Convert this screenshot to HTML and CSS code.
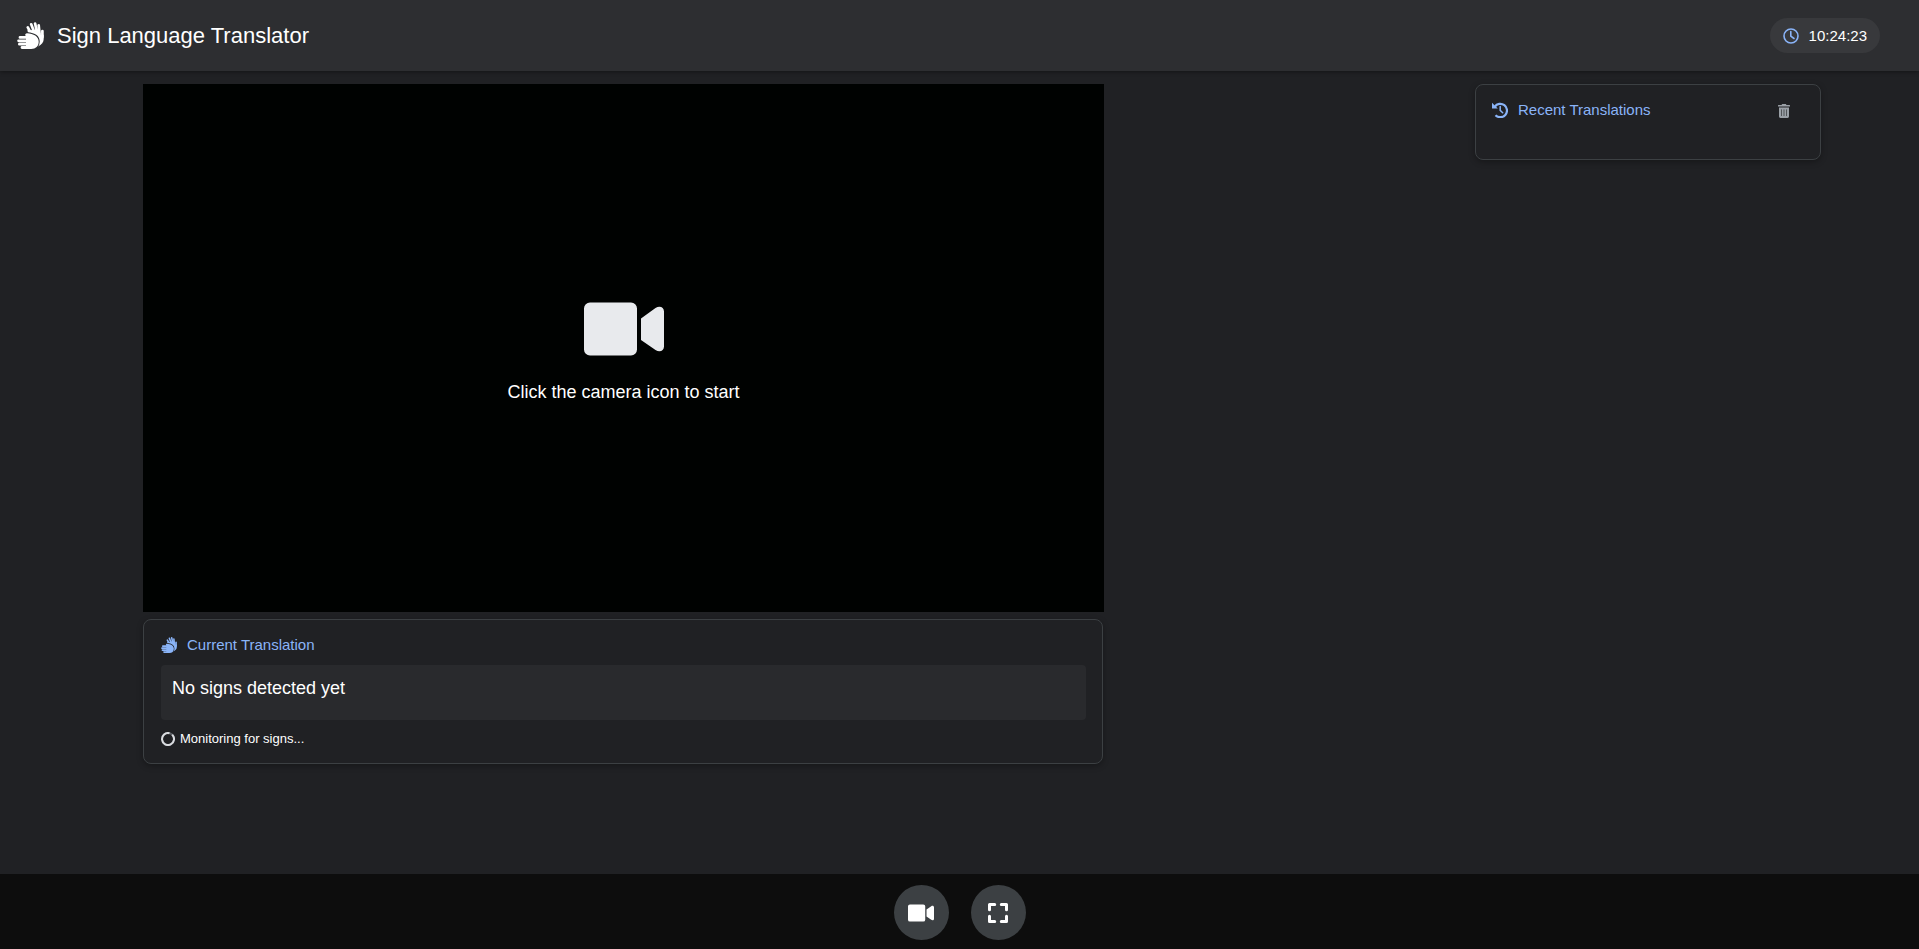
FILE: index.html
```html
<!DOCTYPE html>
<html lang="en">
<head>
<meta charset="utf-8">
<meta name="viewport" content="width=device-width, initial-scale=1">
<title>Sign Language Translator</title>
<link rel="stylesheet" href="styles.css">
</head>
<body>
<svg class="defs" aria-hidden="true">
  <mask id="behind" maskUnits="userSpaceOnUse" x="0" y="0" width="27" height="27">
    <rect width="27" height="27" fill="#fff"/>
    <path fill="#000" stroke="#000" stroke-width="2" d="M9 14.400l-.6-1c-.5-1.300.3-2.300 1.800-2.200 6.300.4 11.500 3 11.500 8.500 0 4.500-3 7.200-7.500 7.200H9z"/>
  </mask>
  <symbol id="hands" viewBox="0 0 27 27">
    <g mask="url(#behind)">
      <path fill="none" stroke="currentColor" stroke-width="2.700" stroke-linecap="round" d="M10.800 5.400 14 11.500M14.200 2.300 17.500 11M18.100 1.500 20 10.500M21.700 3.400 22.600 12M25.400 9v6"/>
      <path fill="currentColor" d="M10 8.500 21 7.500l3 5.200h2.700V17c0 3.500-2 5.500-5.700 7.500z"/>
    </g>
    <path fill="none" stroke="currentColor" stroke-width="2.800" stroke-linecap="round" d="M3 15.400h10M1.600 18.800h11M2.400 22.200h10M5 25.500h8"/>
    <path fill="currentColor" d="M9 14.400l-.6-1c-.5-1.300.3-2.300 1.800-2.200 6.300.4 11.500 3 11.500 8.500 0 4.500-3 7.200-7.500 7.200H9z"/>
  </symbol>
  <symbol id="video" viewBox="0 0 80 54">
    <path fill="currentColor" d="M6 .5h41a6 6 0 0 1 6 6v41a6 6 0 0 1-6 6H6a6 6 0 0 1-6-6v-41a6 6 0 0 1 6-6zM57 16.500 71.500 6c4-2.500 8.500-1 8.500 3.500v35c0 4.500-4.500 6-8.500 3.500L57 38z"/>
  </symbol>
</svg>

<header class="topbar">
  <h1 class="brand"><svg class="brand-icon" aria-hidden="true"><use href="#hands"/></svg>Sign Language Translator</h1>
  <div class="clock">
    <svg class="icon" viewBox="0 0 16 16" aria-hidden="true"><g fill="none" stroke="currentColor" stroke-width="1.600"><circle cx="8" cy="8" r="7"/><path d="M7.800 3.500V8.200l3.200 2.300" stroke-linecap="round"/></g></svg>
    <time>10:24:23</time>
  </div>
</header>

<main class="content">
  <div class="stage">
    <section class="viewer">
      <svg class="viewer-icon" aria-hidden="true"><use href="#video"/></svg>
      <p class="viewer-text">Click the camera icon to start</p>
    </section>
    <section class="card current">
      <h2 class="card-title"><svg class="icon" aria-hidden="true"><use href="#hands"/></svg>Current Translation</h2>
      <div class="output">No signs detected yet</div>
      <p class="status"><svg class="spinner" viewBox="0 0 14 14" aria-hidden="true"><circle cx="7" cy="7" r="6" fill="none" stroke="#5f6368" stroke-width="2"/><path d="M11.200 2.700A6 6 0 1 1 8.500 1.200" fill="none" stroke="#dadce0" stroke-width="2"/></svg>Monitoring for signs...</p>
    </section>
  </div>
  <aside class="card recent">
    <h2 class="card-title"><svg class="icon" viewBox="0 0 16 16" aria-hidden="true"><path d="M2.700 4.800A6.700 6.700 0 1 1 3.500 13.200" fill="none" stroke="currentColor" stroke-width="2.200"/><path d="M0 .8v5.600h5.800z" fill="currentColor"/><path d="M8.200 4.400v4l2.500 2.400" fill="none" stroke="currentColor" stroke-width="1.500" stroke-linecap="round"/></svg>Recent Translations</h2>
    <button class="clear" type="button" aria-label="Clear translations">
      <svg class="trash" viewBox="0 0 12 14" aria-hidden="true"><path fill="currentColor" d="M.5 1H3.500L4.200 0h3.600l.7 1h3q.5 0 .5.500v1H0v-1Q0 1 .5 1zM1 3.400h10v9.200Q11 14 9.600 14H2.400Q1 14 1 12.600z"/><path d="M3.500 5.400v6.600M6 5.400v6.600M8.500 5.400v6.600" stroke="#202124" stroke-width=".6"/></svg>
    </button>
  </aside>
</main>

<footer class="controls">
  <button class="control" type="button" aria-label="Start camera"><svg class="control-video" aria-hidden="true"><use href="#video"/></svg></button>
  <button class="control" type="button" aria-label="Full screen"><svg class="control-full" viewBox="0 0 20 20" aria-hidden="true"><path d="M1.500 6.700V1.500h5.200M13.300 1.500h5.200v5.200M18.500 13.300v5.200h-5.200M6.700 18.500H1.500v-5.200" fill="none" stroke="currentColor" stroke-width="3" stroke-linecap="round" stroke-linejoin="round"/></svg></button>
</footer>
</body>
</html>
```
FILE: styles.css
```css
* { box-sizing: border-box; }

body {
  margin: 0;
  min-height: 100vh;
  display: flex;
  flex-direction: column;
  background: #202124;
  color: #fff;
  font-family: "Liberation Sans", Arial, sans-serif;
}

h1, h2, p { margin: 0; font-weight: 400; }
svg { display: block; flex: none; }
button { padding: 0; border: 0; cursor: pointer; }

.defs { position: absolute; width: 0; height: 0; }
.icon { width: 16px; height: 16px; }

.topbar {
  display: flex;
  align-items: center;
  justify-content: space-between;
  padding: 18px 39px 18px 17px;
  background: #2d2e31;
  box-shadow: 0 1px 4px rgba(0, 0, 0, .4);
}

.brand {
  display: flex;
  align-items: center;
  gap: 13px;
  font-size: 22px;
  line-height: 35px;
}

.brand-icon { width: 27px; height: 27px; }

.clock {
  display: flex;
  align-items: center;
  gap: 10px;
  padding: 0 13px;
  border-radius: 18px;
  background: #38393c;
  font-size: 15px;
  line-height: 35px;
}

.clock .icon { color: #8ab4f8; }

.content {
  flex: 1;
  display: grid;
  grid-template-columns: minmax(0, 961fr) minmax(0, 346fr);
  align-items: start;
  column-gap: 22.1%;
  padding: 13px 98px 20px 143px;
}

.viewer {
  display: flex;
  flex-direction: column;
  align-items: center;
  justify-content: center;
  gap: 24px;
  aspect-ratio: 961 / 528;
  padding-top: 10px;
  background: #000201;
}

.viewer-icon { width: 80px; height: 54px; color: #e8eaed; }
.viewer-text { font-size: 18px; line-height: 24px; }

.card {
  border: 1px solid #3c4043;
  border-radius: 8px;
  background: #202124;
  box-shadow: 0 2px 6px rgba(0, 0, 0, .3);
}

.card-title {
  display: flex;
  align-items: center;
  gap: 10px;
  color: #8ab4f8;
  font-size: 15px;
  line-height: 18px;
}

.current { margin: 7px 1px 0 0; padding: 16px 16px 16px 17px; }

.output {
  min-height: 55px;
  margin: 11px 0;
  padding: 12px 11px;
  border-radius: 4px;
  background: #292a2d;
  font-size: 18px;
  line-height: 22px;
}

.status {
  display: flex;
  align-items: center;
  gap: 5px;
  font-size: 13px;
  line-height: 16px;
}

.spinner { width: 14px; height: 14px; }

.recent {
  display: flex;
  align-items: flex-start;
  justify-content: space-between;
  min-height: 76px;
  padding: 16px 30px 16px 16px;
}

.clear { padding: 3px 0; background: none; color: #9aa0a6; }
.trash { width: 12px; height: 14px; }

.controls {
  display: flex;
  justify-content: center;
  gap: 22px;
  padding: 11px 0 9px;
  background: #0d0d0d;
}

.control {
  display: flex;
  align-items: center;
  justify-content: center;
  width: 55px;
  height: 55px;
  border-radius: 50%;
  background: #3c4043;
  color: #fff;
}

.control-video { width: 26px; height: 18px; }
.control-full { width: 20px; height: 20px; }
```
